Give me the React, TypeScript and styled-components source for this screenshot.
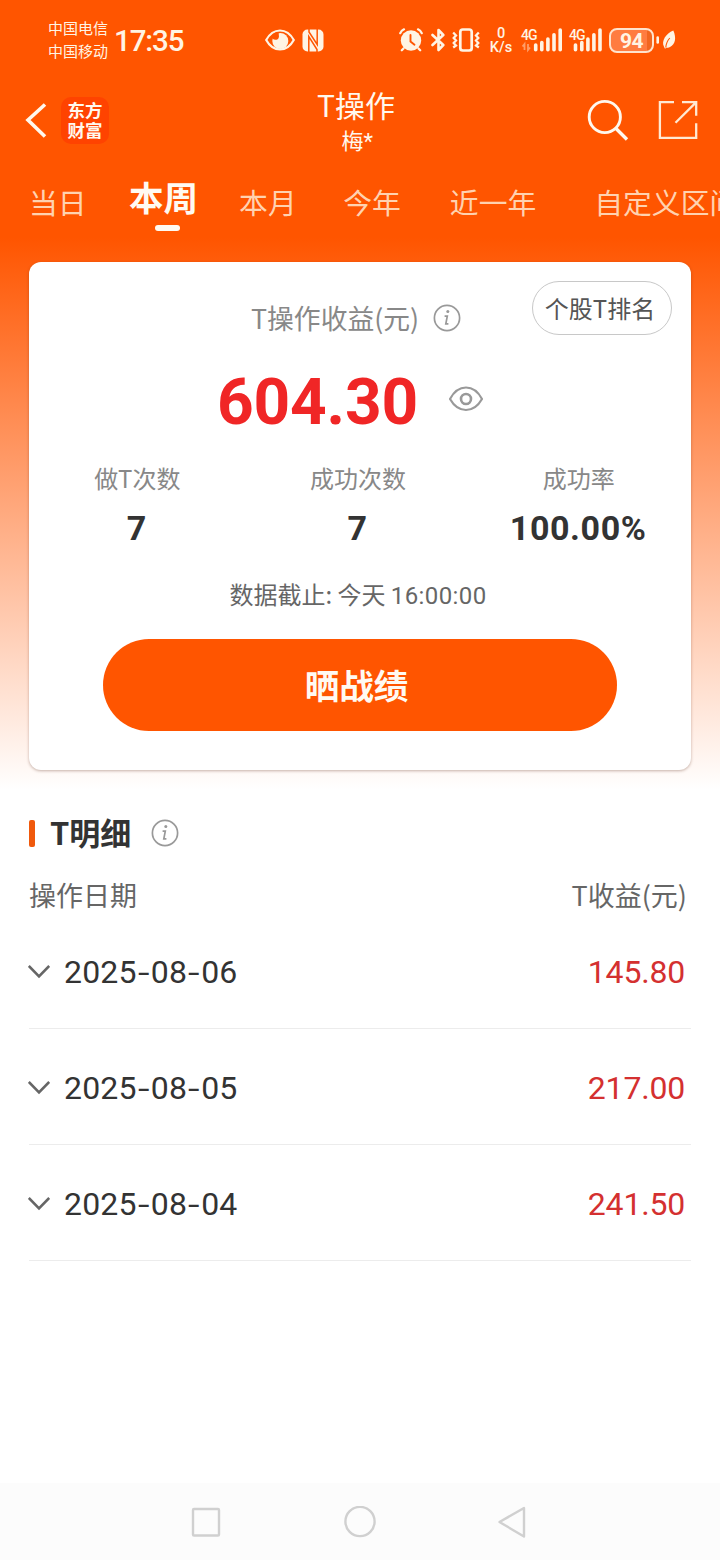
import React from 'react';
import styled, { createGlobalStyle } from 'styled-components';

const GlobalStyle = createGlobalStyle`
  * { box-sizing: border-box; }
  body {
    margin: 0;
    background: #fff;
    font-family: "Noto Sans CJK SC", "Noto Sans", sans-serif;
  }
`;

const numeric = 'Roboto, "Noto Sans CJK SC", sans-serif';

const Screen = styled.div`
  width: 720px;
  height: 1560px;
  overflow: hidden;
  display: flex;
  flex-direction: column;
  color: #333;
  background: linear-gradient(to bottom, #ff5500 0, #ff5500 238px, #ffffff 790px);
`;

const StatusBar = styled.div`
  height: 80px;
  display: flex;
  align-items: center;
  color: #fff4e4;
  padding-left: 48px;
`;

const Carriers = styled.div`
  width: 66px;
  font-size: 15px;
  line-height: 23px;
  font-weight: 400;
  padding-bottom: 2px;
`;

const Clock = styled.div`
  width: 151px;
  font-family: ${numeric};
  font-size: 29.5px;
  line-height: 40px;
  font-weight: 500;
  padding-top: 2px;
  letter-spacing: -1.1px;
`;

const StatusGlyph = styled.svg<{ $gap?: number }>`
  display: block;
  flex: none;
  margin-left: ${(p) => p.$gap ?? 0}px;
`;

const NetSpeed = styled.div`
  width: 26px;
  margin-left: 8px;
  font-family: ${numeric};
  font-size: 14.5px;
  line-height: 14px;
  font-weight: 500;
  text-align: center;
  padding-top: 2px;
`;

const Signal = styled.div<{ $gap: number; $width: number }>`
  width: ${(p) => p.$width}px;
  height: 26px;
  margin-left: ${(p) => p.$gap}px;
  position: relative;
`;

const SignalLabel = styled.span`
  position: absolute;
  left: 0;
  top: 1px;
  font-family: ${numeric};
  font-size: 14px;
  line-height: 14px;
  font-weight: 500;
  letter-spacing: -0.9px;
`;

const Battery = styled.div`
  width: 45px;
  height: 25px;
  margin-left: 6px;
  border: 2px solid #ffe3cc;
  border-radius: 8px;
  background: linear-gradient(to right, #ff7c40 88%, #f2661f 88%);
  font-family: ${numeric};
  font-size: 21px;
  line-height: 22px;
  font-weight: 700;
  text-align: center;
  letter-spacing: -0.5px;
`;

const Header = styled.div`
  height: 80px;
  display: flex;
  align-items: center;
  padding: 0 22px 0 25px;
  color: #fff8ee;
`;

const Logo = styled.div`
  width: 48px;
  height: 47px;
  margin-left: 14px;
  border-radius: 10px;
  background: #ff4300;
  padding-top: 3px;
  font-size: 17.5px;
  line-height: 20px;
  font-weight: 700;
  text-align: center;
`;

const TitleBlock = styled.div`
  width: 90px;
  margin-left: 202px;
  text-align: center;
`;

const Title = styled.div`
  font-size: 30px;
  line-height: 40px;
`;

const Subtitle = styled.div`
  font-size: 22px;
  line-height: 30px;
  padding-left: 3px;
`;

const Numeric = styled.span`
  font-family: ${numeric};
  letter-spacing: 0.4px;
`;

const HeaderActions = styled.div`
  margin-left: auto;
  display: flex;
  gap: 28px;
`;

const Tabs = styled.div`
  height: 102px;
  display: flex;
  white-space: nowrap;
  padding: 22px 0 0 29px;
`;

const Tab = styled.div<{ $gap?: number; $active?: boolean }>`
  flex: none;
  margin-left: ${(p) => p.$gap ?? 0}px;
  font-size: ${(p) => (p.$active ? 34.5 : 28.8)}px;
  font-weight: ${(p) => (p.$active ? 700 : 400)};
  line-height: 40px;
  margin-top: ${(p) => (p.$active ? -6 : 0)}px;
  color: ${(p) => (p.$active ? '#fffaf2' : '#ffd2b0')};
  display: flex;
  flex-direction: column;
  align-items: center;
`;

const TabMark = styled.span`
  width: 25px;
  height: 6px;
  margin-top: 9px;
  margin-left: 7px;
  border-radius: 3px;
  background: #fffaf2;
`;

const Card = styled.section`
  width: 662px;
  height: 508px;
  flex: none;
  margin-left: 29px;
  border-radius: 12px;
  background: #fff;
  box-shadow: 0 1px 3px rgba(90, 40, 20, 0.35);
  display: flex;
  flex-direction: column;
`;

const CardTop = styled.div`
  display: flex;
  align-items: flex-start;
  padding: 19px 19px 0 222px;
`;

const CardTitle = styled.div`
  display: flex;
  align-items: center;
  gap: 14px;
  height: 28px;
  margin-top: 23px;
  font-size: 26.8px;
  line-height: 28px;
  color: #888;
`;

const Lifted = styled.span`
  padding-bottom: 1px;
`;

const RankButton = styled.button`
  width: 140px;
  height: 54px;
  margin-left: auto;
  padding: 0 4px 2px 0;
  border: 1px solid #c8c8c8;
  border-radius: 27px;
  background: #fff;
  color: #555;
  font-family: inherit;
  font-size: 24px;
`;

const AmountRow = styled.div`
  display: flex;
  align-items: center;
  height: 60px;
  margin-top: 34px;
  padding-left: 188px;
`;

const Amount = styled.div`
  width: 231px;
  font-family: ${numeric};
  font-size: 64px;
  line-height: 60px;
  padding-top: 7px;
  font-weight: 700;
  letter-spacing: -0.2px;
  color: #f02626;
`;

const Stats = styled.div`
  display: grid;
  grid-template-columns: repeat(3, 1fr);
  margin: 34px 2px 0 -2px;
  text-align: center;
`;

const StatLabel = styled.div`
  font-size: 24px;
  line-height: 30px;
  color: #888;
`;

const StatValue = styled.div`
  margin: 17px 1px -2px 0;
  font-family: ${numeric};
  font-size: 34px;
  line-height: 36px;
  font-weight: 700;
  letter-spacing: 0.6px;
`;

const Cutoff = styled.div`
  margin: 35px 4px 0 0;
  font-size: 24px;
  line-height: 30px;
  text-align: center;
  color: #666;
`;

const ShareButton = styled.button`
  width: 514px;
  height: 92px;
  margin: auto auto 39px 74px;
  padding: 0 7px 2px 0;
  border: 0;
  border-radius: 46px;
  background: #ff5500;
  color: #fffaf2;
  font-family: inherit;
  font-size: 34.6px;
  font-weight: 700;
`;

const Details = styled.section`
  flex: 1;
  padding: 45px 29px 0;
`;

const DetailsTitle = styled.h2`
  display: flex;
  align-items: center;
  height: 36px;
  margin: 0;
  font-size: 31px;
  line-height: 34px;
  font-weight: 700;
`;

const Accent = styled.span`
  width: 6px;
  height: 27px;
  margin-right: 15px;
  border-radius: 2px;
  background: #f0590c;
`;

const DetailsName = styled.span`
  padding-bottom: 3px;
  margin-right: 20px;
`;

const ColumnHeads = styled.div`
  display: flex;
  justify-content: space-between;
  margin-top: 25px;
  height: 37px;
  padding-right: 4px;
  font-size: 27px;
  line-height: 38px;
  color: #666;
`;

const Row = styled.div`
  display: flex;
  align-items: center;
  height: 116px;
  padding: 2px 6px 0 0;
  border-bottom: 1px solid #ececec;
  font-family: ${numeric};
  font-size: 32px;
  line-height: 40px;
`;

const Chevron = styled.svg`
  margin-left: -1px;
`;

const DateText = styled.span`
  margin-left: 14px;
  letter-spacing: 0.2px;
`;

const Dash = styled.span`
  display: inline-block;
  width: 14px;
  text-align: center;
  transform: scaleX(1.3);
`;

const Profit = styled.span`
  margin-left: auto;
  letter-spacing: -0.2px;
  color: #d43030;
`;

const NavBar = styled.nav`
  height: 77px;
  flex: none;
  background: #fcfcfc;
  display: flex;
  justify-content: center;
  align-items: center;
  gap: 122px;
`;

const InfoIcon = () => (
  <svg width="28" height="28" viewBox="0 0 28 28" fill="none" stroke="#999">
    <circle cx="14" cy="14" r="12.6" strokeWidth="1.7" />
    <circle cx="14.8" cy="7.6" r="1.5" fill="#999" stroke="none" />
    <path d="M11.600 12.200h2.700l-1.500 7.600h2.600" strokeWidth="1.7" />
  </svg>
);

const barTops = [18, 15.5, 12, 7.8, 3];

const SignalBars = ({ xs }: { xs: number[] }) => (
  <g stroke="#fff4e4" strokeWidth="3.6" strokeLinecap="round">
    {xs.map((x, i) => (
      <path key={x} d={`M${x} 22.8V${barTops[i]}`} />
    ))}
  </g>
);

const records = [
  { date: '2025-08-06', profit: '145.80' },
  { date: '2025-08-05', profit: '217.00' },
  { date: '2025-08-04', profit: '241.50' },
];

export default function App() {
  return (
    <>
      <GlobalStyle />
      <Screen>
        <StatusBar>
          <Carriers>
            中国电信
            <br />
            中国移动
          </Carriers>
          <Clock>17:35</Clock>
          <StatusGlyph width="30" height="22" viewBox="0 0 30 22" fill="none">
            <path d="M1.200 11C4.500 5 9.500 1.500 15 1.500S25.500 5 28.800 11C25.500 17 20.500 20.500 15 20.500S4.500 17 1.200 11Z" stroke="#fff4e4" strokeWidth="2.200" />
            <circle cx="15.300" cy="12" r="8" fill="#fff4e4" />
            <path d="M14 3c-1 2 .8 4-.5 6.300-1.200 2-4 1.900-6 .5-2-3 1.500-7.300 6.500-6.800Z" fill="#ff5500" />
          </StatusGlyph>
          <StatusGlyph $gap={7} width="22" height="23" viewBox="0 0 22 23" fill="none">
            <rect x=".5" y=".5" width="21" height="22" rx="5" fill="#fff4e4" />
            <path d="M6.800 23V7.500L15 20.500V23M15.200 0v15.500L7 3V0" stroke="#ff5500" strokeWidth="1.500" />
          </StatusGlyph>
          <StatusGlyph $gap={75} width="24" height="24" viewBox="0 0 24 24" fill="none" stroke="#fff4e4" strokeLinecap="round">
            <circle cx="12" cy="12.500" r="10.200" fill="#fff4e4" stroke="none" />
            <path d="M1.200 5.200Q2.500 2.500 5 1.300M22.800 5.200Q21.500 2.500 19 1.300M4.500 20.500 2.800 22.300M19.500 20.500l1.700 1.800" strokeWidth="2.200" />
            <path d="M11.500 7v6.500l4 3.200" stroke="#ff5500" strokeWidth="1.900" />
          </StatusGlyph>
          <StatusGlyph $gap={8} width="14" height="24" viewBox="0 0 14 24" fill="none" stroke="#fff4e4" strokeWidth="2.600" strokeLinejoin="round" strokeLinecap="round">
            <path d="M1.500 7 12.300 17 7.500 22V2l4.800 5L1.500 17" />
          </StatusGlyph>
          <StatusGlyph $gap={7} width="28" height="24" viewBox="0 0 28 24" fill="none" stroke="#fff4e4" strokeWidth="2.700">
            <rect x="8.300" y="1.500" width="11.400" height="21" rx="2.500" />
            <path d="M1.200 4.500 4 7.500 1.700 10 4 12.500 1.700 15 4 17.500l-2.800 2M26.800 4.500 24 7.500l2.300 2.500-2.300 2.500 2.300 2.500-2.300 2.500 2.800 2" strokeWidth="2.300" />
          </StatusGlyph>
          <NetSpeed>
            0
            <br />
            K/s
          </NetSpeed>
          <Signal $gap={7} $width={42}>
            <SignalLabel>4G</SignalLabel>
            <StatusGlyph width="42" height="26" viewBox="0 0 42 26">
              <SignalBars xs={[14.7, 20.8, 26.9, 33, 39.2]} />
              <path d="M3.500 23v-6l-2 2.500M7 17v6l2-2.500" stroke="#ff9d68" strokeWidth="1.800" fill="none" />
            </StatusGlyph>
          </Signal>
          <Signal $gap={6} $width={34}>
            <SignalLabel>4G</SignalLabel>
            <StatusGlyph width="34" height="26" viewBox="0 0 34 26">
              <SignalBars xs={[6.5, 12.8, 18.9, 24.9, 31]} />
            </StatusGlyph>
          </Signal>
          <Battery>94</Battery>
          <StatusGlyph $gap={1} width="22" height="22" viewBox="0 0 22 22" fill="none">
            <path d="M2.700 8.500v5" stroke="#fff4e4" strokeWidth="2.600" strokeLinecap="round" />
            <path d="M18.300 1.500c3.200 7 2.200 14-3.300 16.500-1.500.7-3 .8-3.700.8l-1.300 1-1-2C6 12 11 4.500 18.300 1.500Z" fill="#fff4e4" />
            <path d="M10.800 18.500c.3-4 1.700-7 4-9.500" stroke="#ff5500" strokeWidth="1.100" />
          </StatusGlyph>
        </StatusBar>

        <Header>
          <svg width="22" height="36" viewBox="0 0 22 36" fill="none" stroke="#fff8ee" strokeWidth="3.600">
            <path d="M20 2.500 3 18 20 34.500" />
          </svg>
          <Logo>
            东方
            <br />
            财富
          </Logo>
          <TitleBlock>
            <Title>T操作</Title>
            <Subtitle>
              梅<Numeric>*</Numeric>
            </Subtitle>
          </TitleBlock>
          <HeaderActions>
            <svg width="44" height="42" viewBox="0 0 44 42" fill="none" stroke="#fff8ee" strokeWidth="2.900">
              <circle cx="18.800" cy="18" r="15.600" />
              <path d="M29.500 29 41 40.500" strokeWidth="3.300" />
            </svg>
            <svg width="40" height="42" viewBox="0 0 40 42" fill="none" stroke="#ffe9d2" strokeWidth="2.300">
              <path d="M16 3.200H1.900v35.700h36.300V24.300M24 3.200h14.200V16.800M38 3.400 17.500 23.800" />
            </svg>
          </HeaderActions>
        </Header>

        <Tabs>
          <Tab>当日</Tab>
          <Tab $gap={42.5} $active>
            本周
            <TabMark />
          </Tab>
          <Tab $gap={41}>本月</Tab>
          <Tab $gap={46.5}>今年</Tab>
          <Tab $gap={49}>近一年</Tab>
          <Tab $gap={58}>自定义区间</Tab>
        </Tabs>

        <Card>
          <CardTop>
            <CardTitle>
              <Lifted>T操作收益(元)</Lifted>
              <InfoIcon />
            </CardTitle>
            <RankButton>个股T排名</RankButton>
          </CardTop>
          <AmountRow>
            <Amount>604.30</Amount>
            <StatusGlyph width="36" height="28" viewBox="0 0 36 28" fill="none" stroke="#999" strokeWidth="2.200">
              <path d="M2 14C6 6.500 11.500 2.500 18 2.500S30 6.500 34 14c-4 7-9.500 11-16 11S6 21 2 14Z" strokeLinejoin="round" />
              <circle cx="18" cy="14" r="5" strokeWidth="2.600" />
            </StatusGlyph>
          </AmountRow>
          <Stats>
            <div>
              <StatLabel>做T次数</StatLabel>
              <StatValue>7</StatValue>
            </div>
            <div>
              <StatLabel>成功次数</StatLabel>
              <StatValue>7</StatValue>
            </div>
            <div>
              <StatLabel>成功率</StatLabel>
              <StatValue>100.00%</StatValue>
            </div>
          </Stats>
          <Cutoff>
            数据截止: 今天 <Numeric>16:00:00</Numeric>
          </Cutoff>
          <ShareButton>晒战绩</ShareButton>
        </Card>

        <Details>
          <DetailsTitle>
            <Accent />
            <DetailsName>T明细</DetailsName>
            <InfoIcon />
          </DetailsTitle>
          <ColumnHeads>
            <span>操作日期</span>
            <span>T收益(元)</span>
          </ColumnHeads>
          {records.map(({ date, profit }) => {
            const [year, month, day] = date.split('-');
            return (
              <Row key={date}>
                <Chevron width="22" height="16" viewBox="0 0 22 16" fill="none" stroke="#666" strokeWidth="2.600">
                  <path d="M.8 2 11 12.500 21.200 2" />
                </Chevron>
                <DateText>
                  {year}
                  <Dash>-</Dash>
                  {month}
                  <Dash>-</Dash>
                  {day}
                </DateText>
                <Profit>{profit}</Profit>
              </Row>
            );
          })}
        </Details>

        <NavBar>
          <svg width="32" height="32" viewBox="0 0 32 32" fill="none" stroke="#d0d0d0" strokeWidth="2.400">
            <rect x="3" y="3" width="26" height="26.500" rx="1" />
          </svg>
          <svg width="32" height="32" viewBox="0 0 32 32" fill="none" stroke="#d0d0d0" strokeWidth="2.400">
            <circle cx="16" cy="15.500" r="14.600" />
          </svg>
          <svg width="32" height="32" viewBox="0 0 32 32" fill="none" stroke="#d0d0d0" strokeWidth="2.400" strokeLinejoin="round">
            <path d="M1.500 16 26 2v28.500Z" />
          </svg>
        </NavBar>
      </Screen>
    </>
  );
}
